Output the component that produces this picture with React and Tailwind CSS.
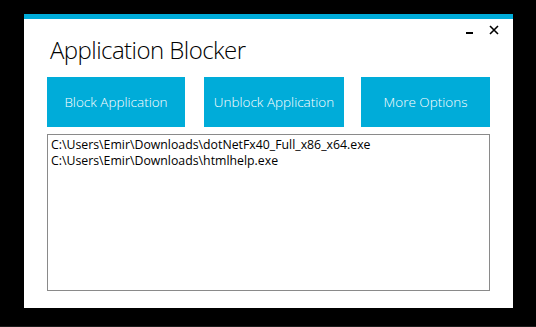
import React from "react";

export default function App() {
  const files = [
    "C:\\Users\\Emir\\Downloads\\dotNetFx40_Full_x86_x64.exe",
    "C:\\Users\\Emir\\Downloads\\htmlhelp.exe",
  ];
  const font = { fontFamily: '"Open Sans", "Noto Sans", sans-serif' };
  return (
    <div className="w-[536px] h-[327px] bg-black pt-[14px] pl-[24px] border-b border-[#1c1c1c] box-border" style={font}>
      <div className="w-[489px] h-[294px] bg-white flex flex-col">
        <div className="h-[5px] bg-[#00acd9]" />
        <div className="flex justify-between h-[58px]">
          <div className="pl-[26px] pt-[16px] text-[24px] leading-[30px] font-light text-black tracking-[-0.55px]">
            Application Blocker
          </div>
          <div className="flex items-start pt-[6px] pr-[14px] gap-[16px]">
            <div className="w-[7px] h-[2px] bg-black mt-[7px]" />
            <svg width="10" height="10" viewBox="0 0 10 10">
              <path d="M1 1 L9 9 M9 1 L1 9" stroke="black" strokeWidth="1.6" fill="none" />
            </svg>
          </div>
        </div>
        <div className="flex pl-[23px] h-[50px]">
          <button className="w-[138px] h-[50px] bg-[#00acd9] text-white text-[13.5px] font-light">
            Block Application
          </button>
          <button className="ml-[19px] w-[140px] h-[50px] bg-[#00acd9] text-white text-[13.5px] font-light">
            Unblock Application
          </button>
          <button className="ml-[17px] w-[129px] h-[50px] bg-[#00acd9] text-white text-[13.5px] font-light">
            More Options
          </button>
        </div>
        <div className="mt-[7px] ml-[23px] w-[443px] h-[157px] border border-[#8a8a8a] px-[3px] pt-[2px]">
          {files.map((f) => (
            <div key={f} className="text-[12.3px] leading-[16px] text-black">
              {f}
            </div>
          ))}
        </div>
      </div>
    </div>
  );
}
